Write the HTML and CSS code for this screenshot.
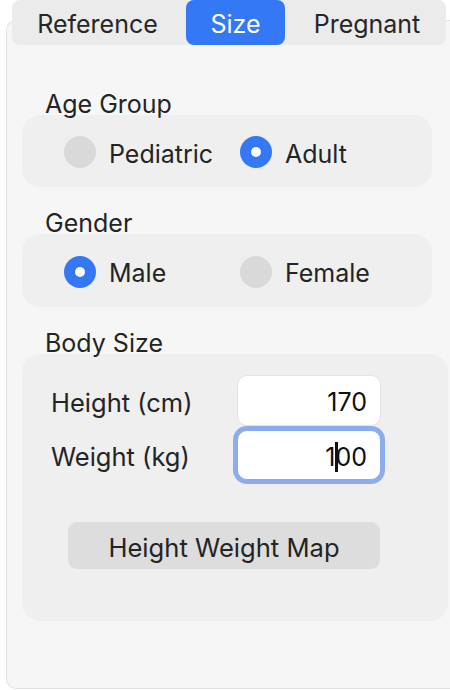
FILE: index.html
```html
<!DOCTYPE html>
<html>
<head>
<meta charset="utf-8">
<link rel="stylesheet" href="styles.css">
</head>
<body>
<div class="page">
  <div class="tabs">
    <div class="tab tab-ref">Reference</div>
    <div class="tab tab-size active">Size</div>
    <div class="tab tab-preg">Pregnant</div>
  </div>
  <div class="panel">
    <div class="label">Age Group</div>
    <div class="group">
      <div class="option"><span class="radio"></span><span class="opt-text">Pediatric</span></div>
      <div class="option"><span class="radio on"></span><span class="opt-text">Adult</span></div>
    </div>
    <div class="label gap">Gender</div>
    <div class="group g2">
      <div class="option"><span class="radio on"></span><span class="opt-text">Male</span></div>
      <div class="option"><span class="radio"></span><span class="opt-text">Female</span></div>
    </div>
    <div class="label gap">Body Size</div>
    <div class="body-box">
      <div class="row">
        <span class="row-label">Height (cm)</span>
        <div class="input">170</div>
      </div>
      <div class="row row2">
        <span class="row-label">Weight (kg)</span>
        <div class="input focused">1<span class="caret"></span>00</div>
      </div>
      <div class="button">Height Weight Map</div>
    </div>
  </div>
</div>
</body>
</html>
```

FILE: styles.css
```css
html, body {
  margin: 0;
  padding: 0;
  background: #ffffff;
  overflow: hidden;
}
body {
  font-family: Inter, "Noto Sans", "Liberation Sans", sans-serif;
  color: #242424;
  -webkit-font-smoothing: antialiased;
}
.page {
  width: 450px;
  height: 690px;
  position: relative;
}
.tabs {
  position: relative;
  z-index: 2;
  margin-left: 12px;
  width: 434px;
  height: 45px;
  background: #ebebeb;
  border-radius: 8px;
  display: flex;
  gap: 3px;
}
.tab {
  height: 45px;
  box-sizing: border-box;
  padding-top: 3px;
  display: flex;
  align-items: center;
  justify-content: center;
  font-size: 25px;
  color: #262626;
  border-radius: 8px;
}
.tab-ref { width: 171px; }
.tab-size { width: 99px; }
.tab-preg { width: 158px; }
.tab.active {
  background: #3478f6;
  color: #ffffff;
}
.panel {
  margin-top: -25px;
  margin-left: 6px;
  width: 444px;
  height: 669px;
  box-sizing: border-box;
  border: 1px solid #e2e2e2;
  border-right: none;
  border-radius: 10px 0 0 10px;
  background: #f6f6f6;
  padding: 70px 0 0 15px;
}
.label {
  height: 24px;
  line-height: 24px;
  font-size: 25px;
  padding-left: 23px;
  color: #242424;
  position: relative;
  top: 1px;
}
.label.gap {
  margin-top: 23px;
}
.group {
  width: 410px;
  height: 72px;
  box-sizing: border-box;
  background: #efefef;
  border-radius: 18px;
  display: flex;
  align-items: center;
  padding-left: 42px;
  padding-top: 2px;
}
.group.g2 {
  height: 73px;
}
.option {
  width: 176px;
  display: flex;
  align-items: center;
  gap: 13px;
}
.radio {
  width: 32px;
  height: 32px;
  border-radius: 50%;
  background: #d9d9d9;
  flex: none;
  display: flex;
  align-items: center;
  justify-content: center;
}
.radio.on {
  background: #3478f6;
}
.radio.on::after {
  content: "";
  width: 10px;
  height: 10px;
  border-radius: 50%;
  background: #ffffff;
}
.opt-text {
  font-size: 25px;
  line-height: 28px;
  color: #242424;
  padding-top: 3px;
}
.body-box {
  width: 426px;
  height: 267px;
  box-sizing: border-box;
  background: #efefef;
  border-radius: 18px;
  padding: 21px 0 0 29px;
}
.row {
  display: flex;
  align-items: center;
  height: 51px;
}
.row2 {
  margin-top: 4px;
  height: 50px;
}
.row-label {
  width: 186px;
  font-size: 25.5px;
  color: #242424;
  padding-top: 3px;
}
.input {
  width: 144px;
  height: 100%;
  box-sizing: border-box;
  background: #ffffff;
  border: 1px solid #e3e3e3;
  border-radius: 10px;
  font-size: 25px;
  color: #111111;
  display: flex;
  align-items: center;
  justify-content: flex-end;
  padding-right: 13px;
  padding-top: 3px;
}
.input.focused {
  border: 1px solid #8badee;
  box-shadow: 0 0 0 4px #8badee;
  border-radius: 10px;
}
.caret {
  display: inline-block;
  width: 3px;
  height: 30px;
  margin: 0 -1.5px;
  background: #111111;
  position: relative;
  left: 1px;
}
.button {
  margin-top: 42px;
  margin-left: 17px;
  width: 312px;
  height: 47px;
  box-sizing: border-box;
  padding-top: 3px;
  background: #dddddd;
  border-radius: 9px;
  display: flex;
  align-items: center;
  justify-content: center;
  font-size: 25.6px;
  color: #242424;
}
```
